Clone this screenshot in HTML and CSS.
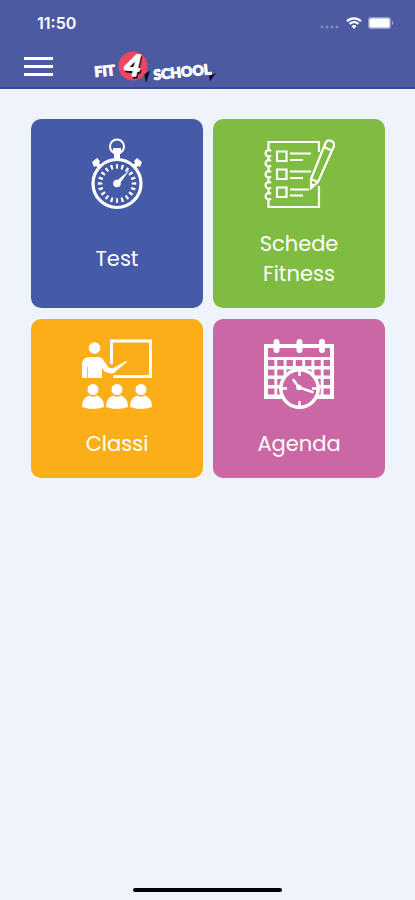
FILE: index.html
```html
<!DOCTYPE html>
<html lang="it">
<head>
    <meta charset="UTF-8">
    <meta name="viewport" content="width=device-width, initial-scale=1.0">
    <title>Fit 4 School</title>
    <link rel="stylesheet" href="styles.css">
</head>
<body>
    <header class="header">
        <div class="status-bar">
            <span class="time">11:50</span>
            <div class="status-icons">
                <svg class="signal" viewBox="0 0 20 4" aria-hidden="true">
                    <circle cx="2" cy="2" r="1.5"/>
                    <circle cx="7" cy="2" r="1.5"/>
                    <circle cx="12" cy="2" r="1.5"/>
                    <circle cx="17" cy="2" r="1.5"/>
                </svg>
                <svg class="wifi" viewBox="0 0 16 12" aria-hidden="true">
                    <path d="M1 4.2a10 10 0 0 1 14 0M3.6 7a6.3 6.3 0 0 1 8.8 0" fill="none" stroke="currentColor" stroke-width="2.2"/>
                    <path d="M5.5 9.2a3.6 3.6 0 0 1 5 0L8 11.9z"/>
                </svg>
                <svg class="battery" viewBox="0 0 26 12" aria-hidden="true">
                    <rect x="0" y="0" width="23" height="12" rx="3" opacity="0.4"/>
                    <rect x="1.500" y="1.500" width="20" height="9" rx="1.5"/>
                    <path d="M24 4c1.6.6 1.6 3.4 0 4z" opacity="0.5"/>
                </svg>
            </div>
        </div>
        <nav class="navbar">
            <button type="button" class="menu-button" aria-label="Menu">
                <span></span>
                <span></span>
                <span></span>
            </button>
            <a href="#" class="logo" aria-label="Fit 4 School">
                <svg viewBox="0 0 122 38" aria-hidden="true">
                    <path d="M51 26l6-3-4 12z" fill="#0b0b18"/>
                    <path d="M116 28l7-3-6 8z" fill="#0b0b18"/>
                    <circle cx="40" cy="18" r="14.500" fill="#ee4560"/>
                    <text class="logo-four logo-shadow" x="32" y="30" transform="rotate(6 40 19)">4</text>
                    <text class="logo-four" x="31" y="28" transform="rotate(6 40 19)">4</text>
                    <text class="logo-word" x="2" y="29" transform="rotate(-6 2 29)">FIT</text>
                    <text class="logo-word" x="61" y="32" transform="rotate(-6 61 32)">SCHOOL</text>
                </svg>
            </a>
        </nav>
    </header>

    <main class="cards">
        <a href="#" class="card card-test">
            <svg class="card-icon" viewBox="0 0 72 72" aria-hidden="true">
                <circle cx="36" cy="8.500" r="7" fill="none" stroke="currentColor" stroke-width="2"/>
                <path d="M32 10h8v6h-1v6h-6v-6h-1z"/>
                <path d="M11 24l5-4 3 3-1 2 3 3-3 3-3-3-2 1zM61 24l-5-4-3 3 1 2-3 3 3 3 3-3 2 1z"/>
                <circle cx="36" cy="45.500" r="24" fill="none" stroke="currentColor" stroke-width="3.200"/>
                <circle cx="36" cy="45.500" r="17" fill="none" stroke="currentColor" stroke-width="4.500" pathLength="100" stroke-dasharray="2 3" stroke-dashoffset="1"/>
                <circle cx="36" cy="45.500" r="3.800"/>
                <path d="M35 43.500l14-12-11 15z"/>
            </svg>
            <span class="card-title">Test</span>
        </a>

        <a href="#" class="card card-schede">
            <svg class="card-icon" viewBox="0 0 72 72" aria-hidden="true">
                <g fill="none" stroke="currentColor" stroke-width="2.200">
                    <path d="M5.500 13V4h50.500v10M56 48v21H5.500v-8M5.500 18v4M5.500 28v5M5.500 39v5M5.500 50v4"/>
                    <path d="M8 13a3.200 3.200 0 1 0 0 4.500M8 23a3.200 3.200 0 1 0 0 4.500M8 34a3.200 3.200 0 1 0 0 4.500M8 45a3.200 3.200 0 1 0 0 4.500M8 56a3.200 3.200 0 1 0 0 4.500"/>
                    <path d="M14 13.500h9.500v9.500H14zM14 31.500h9.500v9.500H14zM14 49.500h9.500v9.500H14z"/>
                    <path d="M27 15.500h21M27 22h13M27 33.500h21M27 40h13M27 51.500h19M27 57.500h13"/>
                    <path d="M48 41L62.500 5q2-4 6-2t2 6L55 44l-7 6zM48 41l7 3M61 9l7.500 3.500"/>
                </g>
                <path d="M48 45l4 2-5 5z"/>
            </svg>
            <span class="card-title">Schede Fitness</span>
        </a>

        <a href="#" class="card card-classi">
            <svg class="card-icon" viewBox="0 0 72 72" aria-hidden="true">
                <path d="M30.500 26V3h39v35.500h-37" fill="none" stroke="currentColor" stroke-width="3"/>
                <circle cx="13.500" cy="10" r="5.800"/>
                <path d="M1 40V27q0-8 8-8h8q4 0 6 4l4.500 6.500 4 1L45 23l1 1-12 10q-2 2-4 1.500l-6-1.500-3-4v10z"/>
                <path d="M6.500 29v11" stroke="#fbae17" stroke-width="0.800"/>
                <g id="pupil">
                    <circle cx="12" cy="51.500" r="5.500"/>
                    <path d="M1 69q0-9 7-11.500q4 2.500 8 0q7 2.500 7 11.500q-11 4-22 0z"/>
                </g>
                <use href="#pupil" x="24"/>
                <use href="#pupil" x="48"/>
            </svg>
            <span class="card-title">Classi</span>
        </a>

        <a href="#" class="card card-agenda">
            <svg class="card-icon" viewBox="0 0 72 72" aria-hidden="true">
                <path d="M1 6h70v55H1z"/>
                <path d="M5 10h62v9H5z" fill="#cb67a4"/>
                <g stroke="#cb67a4" stroke-width="6" stroke-dasharray="6.400 2.870">
                    <path d="M5 25h62"/>
                    <path d="M5 34.500h62"/>
                    <path d="M5 44h62"/>
                    <path d="M5 53.500h62"/>
                </g>
                <rect x="10.500" y="1" width="6" height="14" rx="3"/>
                <rect x="33.500" y="1" width="6" height="14" rx="3"/>
                <rect x="56" y="1" width="6" height="14" rx="3"/>
                <circle cx="36.500" cy="50.500" r="20.500"/>
                <circle cx="36.500" cy="50.500" r="17" fill="#cb67a4"/>
                <path d="M36.500 33v5M36.500 63v5M19 50.500h5M49 50.500h5" stroke="currentColor" stroke-width="2.500"/>
                <path d="M30.500 42l5.500 7.500 13.500 4.500" fill="none" stroke="currentColor" stroke-width="2.600" stroke-linecap="round"/>
                <circle cx="36" cy="49.500" r="2.800"/>
            </svg>
            <span class="card-title">Agenda</span>
        </a>
    </main>

    <div class="home-indicator"></div>
</body>
</html>
```

FILE: styles.css
```css
* {
    box-sizing: border-box;
}

body {
    font-family: Poppins, Inter, sans-serif;
    background-color: #eef4f9;
    margin: 0;
    min-height: 100vh;
    display: flex;
    flex-direction: column;
    color: white;
}

svg {
    display: block;
    fill: currentColor;
}

.header {
    background-color: #4c5ba1;
    border-bottom: 2px solid #3d4a9c;
}

.status-bar {
    display: flex;
    justify-content: space-between;
    align-items: center;
    height: 46px;
    padding: 0 21px 0 37px;
}

.time {
    font-family: Inter, sans-serif;
    font-size: 16px;
    font-weight: 600;
}

.status-icons {
    display: flex;
    align-items: center;
    gap: 6px;
}

.signal {
    width: 20px;
    height: 4px;
    margin-top: 8px;
    opacity: 0.3;
}

.wifi {
    width: 16px;
    height: 12px;
}

.battery {
    width: 26px;
    height: 12px;
}

.navbar {
    display: flex;
    align-items: center;
    gap: 40px;
    height: 41px;
    padding: 0 24px;
}

.menu-button {
    display: flex;
    flex-direction: column;
    gap: 5px;
    width: 29px;
    padding: 0;
    border: none;
    background: none;
    cursor: pointer;
}

.menu-button span {
    height: 3px;
    width: 100%;
    background-color: white;
}

.logo {
    color: white;
}

.logo svg {
    width: 122px;
    height: 38px;
    overflow: visible;
}

.logo-word {
    font-family: Lato, sans-serif;
    font-size: 14px;
    font-weight: 900;
    stroke: white;
    stroke-width: 1px;
}

.logo-four {
    font-family: Lato, sans-serif;
    font-size: 30px;
    font-weight: 900;
    font-style: italic;
    stroke: currentColor;
    stroke-width: 1px;
}

.logo-shadow {
    fill: #15152a;
    stroke: #15152a;
}

.cards {
    display: grid;
    grid-template-columns: 1fr 1fr;
    gap: 11px 10px;
    padding: 30px 30px 30px 31px;
}

.card {
    display: flex;
    flex-direction: column;
    align-items: center;
    gap: 19px;
    padding: 19px;
    border-radius: 10px;
    color: white;
    text-decoration: none;
}

.card-icon {
    width: 72px;
    height: 72px;
}

.card-title {
    display: flex;
    align-items: center;
    flex: 1;
    max-width: 100px;
    font-size: 21px;
    line-height: 30px;
    text-align: center;
}

.card-test {
    background-color: #465ba7;
}

.card-schede {
    background-color: #80bc42;
}

.card-classi {
    background-color: #fbae17;
}

.card-agenda {
    background-color: #cb67a4;
}

.home-indicator {
    width: 36%;
    height: 4px;
    margin: auto auto 8px;
    border-radius: 2px;
    background-color: black;
}
```
